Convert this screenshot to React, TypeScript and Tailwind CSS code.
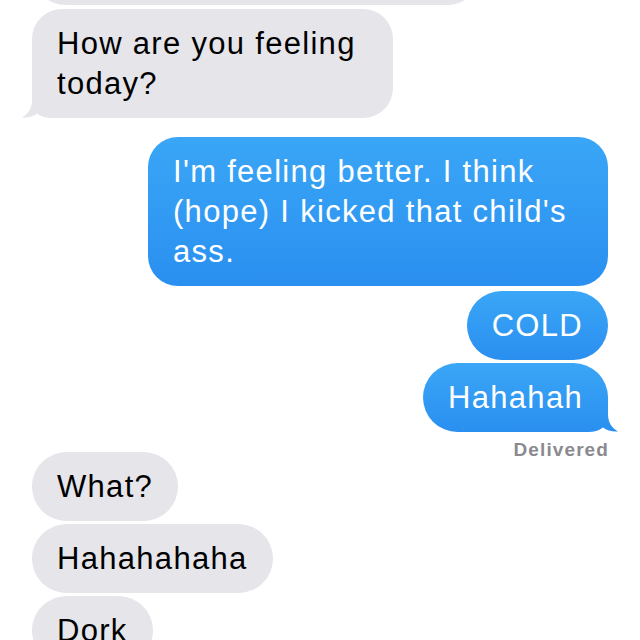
const font = "font-['Liberation_Sans',Arial,Helvetica,sans-serif]";

// tail drawn over the bubble's bottom corner, tip pointing outwards
const GrayTail = () => (
  <svg
    className="absolute -left-[10px] bottom-0"
    width="44"
    height="36"
    viewBox="0 0 44 36"
  >
    <path
      d="M10 0 L10 18 C10 27 6 32 0 35.5 C6 36 11 34.5 15 31.5 C19 34.5 24 36 30 36 L44 36 L44 0 Z"
      fill="#e5e5ea"
    />
  </svg>
);

// gradient picks up where the bubble's own gradient is at this height
const BlueTail = () => (
  <svg
    className="absolute -right-[10px] bottom-0"
    width="44"
    height="36"
    viewBox="0 0 44 36"
  >
    <defs>
      <linearGradient id="tailBlue" x1="0" y1="0" x2="0" y2="36" gradientUnits="userSpaceOnUse">
        <stop offset="0" stopColor="#329bf3" />
        <stop offset="1" stopColor="#2a8ff0" />
      </linearGradient>
    </defs>
    <path
      d="M34 0 L34 18 C34 27 38 32 44 35.5 C38 36 33 34.5 29 31.5 C25 34.5 20 36 14 36 L0 36 L0 0 Z"
      fill="url(#tailBlue)"
    />
  </svg>
);

interface BubbleProps {
  text: string;
  tail?: boolean;
  className?: string;
}

const Gray = ({ text, tail, className = "" }: BubbleProps) => (
  <div className={`relative self-start bg-[#e5e5ea] text-black px-[25px] pt-[15px] pb-[14px] ${className}`}>
    {tail && <GrayTail />}
    <p className="relative text-[31px] leading-[40px] tracking-[1.3px]">{text}</p>
  </div>
);

const Blue = ({ text, tail, className = "" }: BubbleProps) => (
  <div className={`relative self-end bg-linear-to-b from-[#3aa6f6] to-[#2a8ff0] text-white px-[25px] pt-[15px] pb-[14px] ${className}`}>
    {tail && <BlueTail />}
    <p className="relative text-[31px] leading-[40px] tracking-[1.3px]">{text}</p>
  </div>
);

export default function App() {
  return (
    <div className={`w-[640px] h-[640px] overflow-hidden bg-white ${font}`}>
      <div className="flex flex-col px-[32px]">
        <div className="self-start w-[449px] h-[68px] -mt-[63px] rounded-full bg-[#e5e5ea]" />

        <Gray
          text="How are you feeling today?"
          tail
          className="mt-[4px] w-[361px] rounded-[30px]"
        />

        <Blue
          text="I'm feeling better. I think (hope) I kicked that child's ass."
          className="mt-[19px] w-[460px] rounded-[30px]"
        />
        <Blue text="COLD" className="mt-[5px] rounded-full" />
        <Blue text="Hahahah" tail className="mt-[3px] rounded-full" />

        <div className="self-end mt-[8px] h-[12px] leading-[20px] text-[19px] font-bold tracking-[1.1px] text-[#8a8a8f] -mr-[1px]">
          Delivered
        </div>

        <Gray text="What?" className="rounded-full" />
        <Gray text="Hahahahaha" className="mt-[3px] rounded-full" />
        <Gray text="Dork" className="mt-[3px] rounded-full" />
      </div>
    </div>
  );
}
